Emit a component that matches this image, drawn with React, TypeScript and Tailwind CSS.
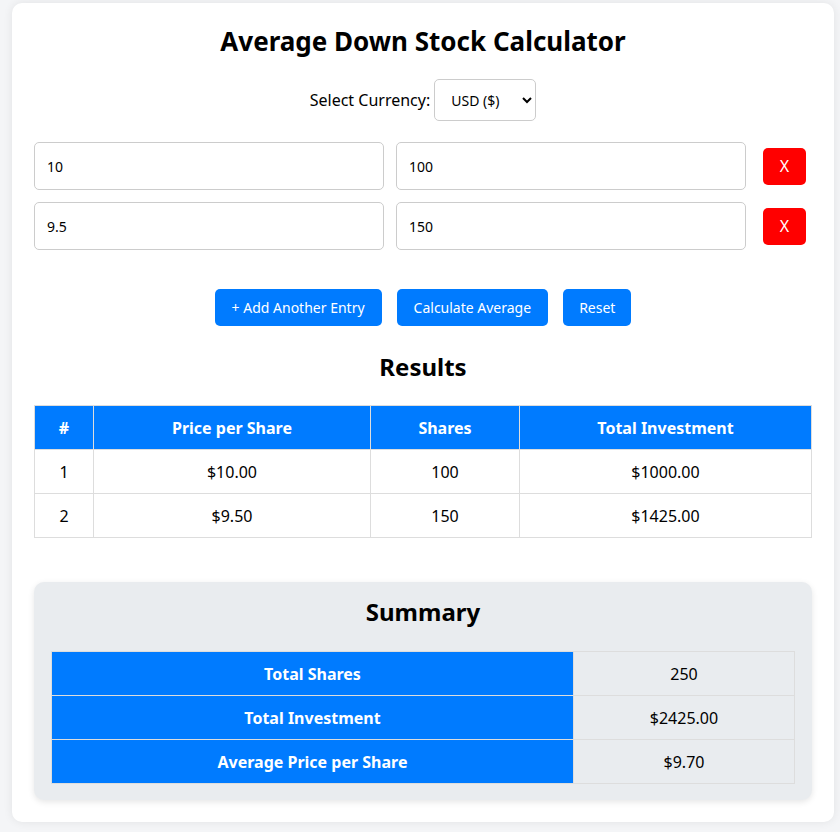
const entries = [
  { price: '10', shares: '100' },
  { price: '9.5', shares: '150' },
];

const rows = [
  { n: 1, price: '$10.00', shares: '100', total: '$1000.00' },
  { n: 2, price: '$9.50', shares: '150', total: '$1425.00' },
];

const summary = [
  { label: 'Total Shares', value: '250' },
  { label: 'Total Investment', value: '$2425.00' },
  { label: 'Average Price per Share', value: '$9.70' },
];

export default function App() {
  return (
    <div className="min-h-[832px] bg-[#f4f5f7] pt-[3px] pl-[12px] pr-[6px] pb-[9px] font-['Liberation_Sans',Arial,sans-serif] text-black">
      <div className="bg-white rounded-[10px] shadow-[0_0_10px_rgba(0,0,0,0.08)] px-[22px] pt-[22px] pb-[22px]">
        <h1 className="text-[26px] font-bold text-center leading-[32px]">Average Down Stock Calculator</h1>

        <div className="flex items-center justify-center gap-[4px] mt-[22px] text-[16px]">
          <label>Select Currency:</label>
          <select className="h-[42px] w-[102px] border border-[#ccc] rounded-[5px] px-[12px] text-[14px] bg-white">
            <option>USD ($)</option>
          </select>
        </div>

        <div className="flex flex-col gap-[12px] mt-[21px]">
          {entries.map((e, i) => (
            <div key={i} className="flex items-center gap-[12px]">
              <input
                defaultValue={e.price}
                className="flex-1 h-[48px] border border-[#ccc] rounded-[5px] px-[12px] text-[14px]"
              />
              <input
                defaultValue={e.shares}
                className="flex-1 h-[48px] border border-[#ccc] rounded-[5px] px-[12px] text-[14px]"
              />
              <button className="ml-[5px] w-[43px] h-[37px] bg-[#ff0000] text-white rounded-[5px] text-[16px] mr-[6px]">
                X
              </button>
            </div>
          ))}
        </div>

        <div className="flex justify-center gap-[15px] mt-[39px] text-[14px] text-white">
          <button className="h-[37px] px-[17px] bg-[#007bff] rounded-[5px]">+ Add Another Entry</button>
          <button className="h-[37px] px-[17px] bg-[#007bff] rounded-[5px]">Calculate Average</button>
          <button className="h-[37px] px-[16px] bg-[#007bff] rounded-[5px]">Reset</button>
        </div>

        <h2 className="text-[24px] font-bold text-center mt-[26px] leading-[30px]">Results</h2>

        <table className="w-full border-collapse mt-[23px] text-[16px] text-center">
          <thead>
            <tr className="bg-[#007bff] text-white font-bold h-[44px]">
              <th className="border border-[#ddd] w-[59px]">#</th>
              <th className="border border-[#ddd] w-[277px]">Price per Share</th>
              <th className="border border-[#ddd] w-[149px]">Shares</th>
              <th className="border border-[#ddd]">Total Investment</th>
            </tr>
          </thead>
          <tbody>
            {rows.map((r) => (
              <tr key={r.n} className="h-[44px]">
                <td className="border border-[#ddd]">{r.n}</td>
                <td className="border border-[#ddd]">{r.price}</td>
                <td className="border border-[#ddd]">{r.shares}</td>
                <td className="border border-[#ddd]">{r.total}</td>
              </tr>
            ))}
          </tbody>
        </table>

        <div className="mt-[44px] bg-[#e9ecef] rounded-[10px] shadow-[0_2px_6px_rgba(0,0,0,0.1)] px-[17px] pt-[15px] pb-[16px]">
          <h2 className="text-[24px] font-bold text-center leading-[30px]">Summary</h2>
          <table className="w-full border-collapse mt-[24px] text-[16px] text-center">
            <tbody>
              {summary.map((s) => (
                <tr key={s.label} className="h-[44px]">
                  <th className="border border-[#ddd] bg-[#007bff] text-white font-bold w-[522px]">{s.label}</th>
                  <td className="border border-[#ddd]">{s.value}</td>
                </tr>
              ))}
            </tbody>
          </table>
        </div>
      </div>
    </div>
  );
}
